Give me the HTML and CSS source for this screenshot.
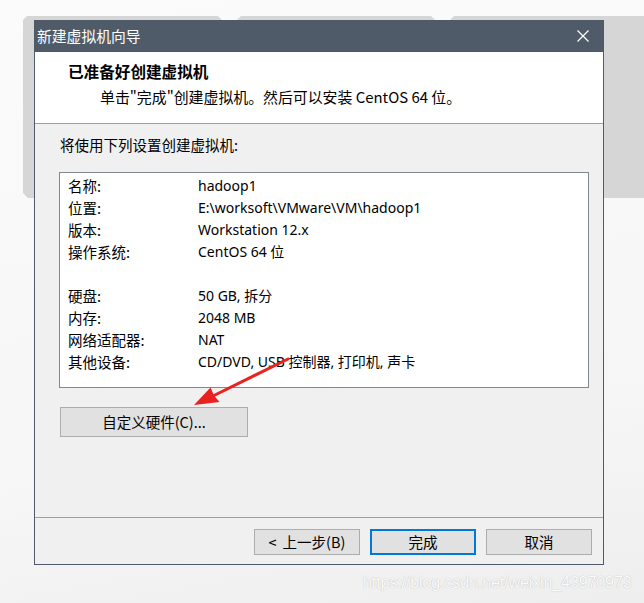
FILE: index.html
```html
<!DOCTYPE html>
<html lang="zh-CN">
<head>
<meta charset="utf-8">
<title>新建虚拟机向导</title>
<link rel="stylesheet" href="styles.css">
</head>
<body>
<div class="desktop">
  <svg class="backwin" width="644" height="200" viewBox="0 0 644 200">
    <polygon points="27,16 218,16 222,20 237,20 241,16 431,16 435,20 450,20 454,16 644,16 644,198 28,198 23,193 23,20" fill="#d6d6d6"/>
  </svg>

  <div class="dialog">
    <div class="titlebar">
      <span class="title">新建虚拟机向导</span>
      <svg class="close" width="12" height="12" viewBox="0 0 12 12">
        <path d="M0.5 0.5 L11.5 11.5 M11.5 0.5 L0.5 11.5" stroke="#ffffff" stroke-width="1.2" fill="none"/>
      </svg>
    </div>
    <div class="header">
      <div class="h-title">已准备好创建虚拟机</div>
      <div class="h-sub">单击"完成"创建虚拟机。然后可以安装 CentOS 64 位。</div>
    </div>
    <div class="body">
      <div class="intro">将使用下列设置创建虚拟机:</div>
      <div class="summary">
        <div class="row"><span class="k">名称:</span><span class="v">hadoop1</span></div>
        <div class="row"><span class="k">位置:</span><span class="v">E:\worksoft\VMware\VM\hadoop1</span></div>
        <div class="row"><span class="k">版本:</span><span class="v">Workstation 12.x</span></div>
        <div class="row"><span class="k">操作系统:</span><span class="v">CentOS 64 位</span></div>
        <div class="row blank"></div>
        <div class="row"><span class="k">硬盘:</span><span class="v">50 GB, 拆分</span></div>
        <div class="row"><span class="k">内存:</span><span class="v">2048 MB</span></div>
        <div class="row"><span class="k">网络适配器:</span><span class="v">NAT</span></div>
        <div class="row"><span class="k">其他设备:</span><span class="v">CD/DVD, USB 控制器, 打印机, 声卡</span></div>
      </div>
      <button class="btn custom">自定义硬件(C)...</button>
    </div>
    <div class="footer">
      <button class="btn"><span class="lt">&lt;</span>上一步(B)</button>
      <button class="btn primary">完成</button>
      <button class="btn">取消</button>
    </div>
    <svg class="arrow" width="644" height="603" viewBox="0 0 644 603">
      <line x1="288" y1="359" x2="213" y2="396" stroke="#e8231f" stroke-width="3" stroke-linecap="round"/>
      <polygon points="194,405 219.5,402 214,395.5 210.5,387.5" fill="#e8231f"/>
    </svg>
  </div>

  <div class="watermark">https://blog.csdn.net/weixin_43970973</div>
</div>
</body>
</html>
```

FILE: styles.css
```css
* { box-sizing: border-box; }

html, body {
  margin: 0;
  padding: 0;
}

body {
  width: 644px;
  height: 603px;
  overflow: hidden;
  background: linear-gradient(170deg, #fbfbfb 0%, #f6f6f6 70%, #eeeeee 100%);
  font-family: "Noto Sans", "Noto Sans CJK SC", sans-serif;
  color: #000;
}

.desktop {
  position: relative;
  width: 644px;
  height: 603px;
  padding: 20px 0 0 34px;
}

.backwin {
  position: absolute;
  left: 0;
  top: 0;
}

.dialog {
  position: relative;
  width: 570px;
  height: 545px;
  border: 1px solid #4f5b69;
  background: #f0f0f0;
  display: flex;
  flex-direction: column;
}

.titlebar {
  background: #4f5b69;
  display: flex;
  align-items: center;
  justify-content: space-between;
  padding: 0 15px 0 3px;
  margin: -1px -1px 0 -1px;
  height: 32px;
}

.title {
  color: #ffffff;
  font-family: "Noto Sans CJK SC", sans-serif;
  font-size: 14.8px;
  line-height: 20px;
}

.header {
  height: 72px;
  background: #ffffff;
  border-bottom: 1px solid #a0a0a0;
  padding: 9px 0 0 33px;
  font-family: "Noto Sans CJK SC", sans-serif;
}

.h-title {
  font-weight: bold;
  font-size: 15.6px;
  line-height: 21px;
}

.h-sub {
  margin-top: 4px;
  padding-left: 32px;
  font-size: 14.9px;
  line-height: 21px;
}

.body {
  flex: 1;
  padding: 11px 0 0 25px;
  border-bottom: 1px solid #a0a0a0;
  font-size: 14.5px;
}

.intro {
  line-height: 20px;
  font-family: "Noto Sans CJK SC", sans-serif;
}

.summary {
  margin: 17px 0 0 -1px;
  width: 530px;
  height: 216px;
  background: #ffffff;
  border: 1px solid #828790;
  padding: 2px 0 0 8px;
}

.row {
  display: flex;
  height: 22px;
  line-height: 22px;
  white-space: nowrap;
}

.k {
  width: 130px;
  font-family: "Noto Sans CJK SC", sans-serif;
}

.v {
  font-family: "Noto Sans", "Noto Sans CJK SC", sans-serif;
  font-size: 14px;
}

.btn {
  height: 26px;
  width: 106px;
  padding: 0;
  background: #e1e1e1;
  border: 1px solid #adadad;
  font-family: "Noto Sans CJK SC", sans-serif;
  font-size: 14.5px;
  color: #000;
  line-height: 20px;
}

.lt {
  margin-right: 6px;
}

.custom {
  display: block;
  margin: 19px 0 0 0;
  width: 188px;
  height: 30px;
}

.footer {
  height: 46px;
  display: flex;
  justify-content: flex-end;
  gap: 10px;
  padding: 11px 11px 0 0;
}

.primary {
  border: 2px solid #0078d7;
}

.arrow {
  position: absolute;
  left: -35px;
  top: -21px;
  pointer-events: none;
}

.watermark {
  position: absolute;
  left: 363px;
  top: 572px;
  font-family: "Liberation Sans", sans-serif;
  font-size: 16px;
  line-height: 22px;
  color: #fafafa;
  text-shadow: 0 0 1px #c0c0c0, 0 0 1px #d0d0d0;
  letter-spacing: -0.1px;
}
```
